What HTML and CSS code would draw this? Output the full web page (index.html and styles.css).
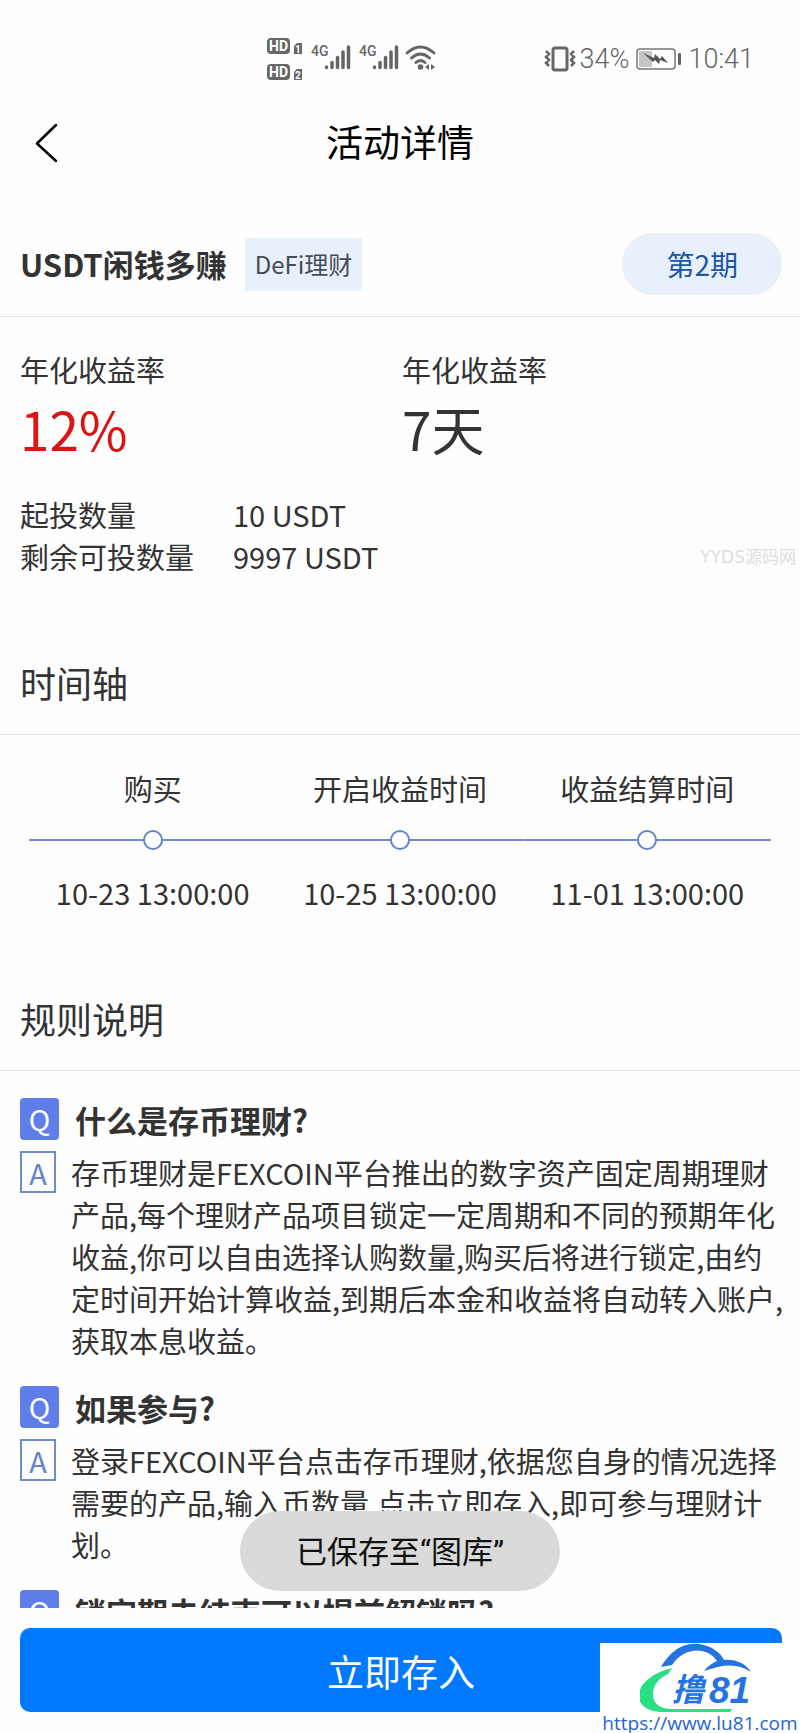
FILE: index.html
```html
<!DOCTYPE html>
<html lang="zh-CN">
<head>
<meta charset="utf-8">
<meta name="viewport" content="width=device-width, initial-scale=1">
<title>活动详情</title>
<link rel="stylesheet" href="styles.css">
</head>
<body>
<div class="status">
  <svg class="status-signal" width="170" height="48" viewBox="0 0 170 48" aria-hidden="true">
    <g fill="#666">
      <rect x="0" y="3" width="23" height="16" rx="4"/>
      <rect x="0" y="29" width="23" height="16" rx="4"/>
      <path d="M27 11l3-3h5v11h-8zM27 37l3-3h5v11h-8z"/>
    </g>
    <g class="hd-text">
      <text x="2" y="16">HD</text>
      <text x="2" y="42">HD</text>
      <text x="28" y="18" class="hd-num">1</text>
      <text x="28" y="44" class="hd-num">2</text>
    </g>
    <g class="net-text">
      <text x="44" y="21">4G</text>
      <text x="92" y="21">4G</text>
    </g>
    <g stroke="#666" stroke-width="3.500" stroke-linecap="round">
      <path d="M59.500 32v0.500M65 27.500v5M70.500 22.500v10M76 17v15.500M81.500 12v20.500"/>
      <path d="M107.500 32v0.500M113 27.500v5M118.500 22.500v10M124 17v15.500M129.500 12v20.500"/>
    </g>
    <g fill="none" stroke="#666" stroke-width="3" stroke-linecap="round">
      <path d="M140 18q13.500-12 27 0M144.500 23q9-8 18 0M149 27.500q4.500-4 9 0"/>
    </g>
    <circle cx="153.500" cy="32" r="2.800" fill="#666"/>
    <path d="M162 29v6l-4-3zM164 29v6l4-3z" fill="#666"/>
  </svg>
  <div class="status-right">
    <svg width="32" height="26" viewBox="0 0 32 26" fill="none" stroke="#666" aria-hidden="true">
      <rect x="9" y="2" width="14" height="22" rx="2" stroke-width="3"/>
      <path d="M2 5l3 3-3 3 3 3-3 3 3 3M30 5l-3 3 3 3-3 3 3 3-3 3" stroke-width="2.500"/>
    </svg>
    <span>34%</span>
    <svg class="battery" width="46" height="22" viewBox="0 0 46 22" aria-hidden="true">
      <rect x="1" y="1" width="38" height="20" rx="3" fill="none" stroke="#777" stroke-width="1.500"/>
      <rect x="3" y="3" width="13" height="16" fill="#c6c6c6"/>
      <path d="M7 5l11 5 1-4 5 5 2-3 6 7-8-3-1 4-4-4-2 2z" fill="#555"/>
      <rect x="42" y="5" width="3" height="12" rx="1" fill="#666"/>
    </svg>
    <span>10:41</span>
  </div>
</div>

<header class="nav">
  <button class="back" type="button" aria-label="返回">
    <svg width="24" height="40" viewBox="0 0 24 40" fill="none" stroke="#000" stroke-width="2.500" stroke-linecap="round" stroke-linejoin="round"><path d="M21 2L2 20.500 21 38"/></svg>
  </button>
  <h1>活动详情</h1>
</header>

<main class="content">
  <section class="product">
    <h2>USDT闲钱多赚</h2>
    <span class="tag">DeFi理财</span>
    <span class="period">第2期</span>
  </section>

  <section class="summary">
    <dl class="rates">
      <div><dt>年化收益率</dt><dd class="red">12%</dd></div>
      <div><dt>年化收益率</dt><dd>7天</dd></div>
    </dl>
    <dl class="amounts">
      <dt>起投数量</dt><dd>10 USDT</dd>
      <dt>剩余可投数量</dt><dd>9997 USDT</dd>
    </dl>
    <span class="watermark">YYDS源码网</span>
  </section>

  <h2 class="section-title">时间轴</h2>
  <ol class="timeline">
    <li><span>购买</span><i class="dot"></i><time>10-23 13:00:00</time></li>
    <li><span>开启收益时间</span><i class="dot"></i><time>10-25 13:00:00</time></li>
    <li><span>收益结算时间</span><i class="dot"></i><time>11-01 13:00:00</time></li>
  </ol>

  <h2 class="section-title">规则说明</h2>
  <section class="faq">
    <article>
      <h3><span class="q">Q</span>什么是存币理财?</h3>
      <div class="answer"><span class="a">A</span><p>存币理财是FEXCOIN平台推出的数字资产固定周期理财产品,每个理财产品项目锁定一定周期和不同的预期年化收益,你可以自由选择认购数量,购买后将进行锁定,由约定时间开始计算收益,到期后本金和收益将自动转入账户,获取本息收益。</p></div>
    </article>
    <article>
      <h3><span class="q">Q</span>如果参与?</h3>
      <div class="answer"><span class="a">A</span><p>登录FEXCOIN平台点击存币理财,依据您自身的情况选择需要的产品,输入币数量,点击立即存入,即可参与理财计划。</p></div>
    </article>
    <article>
      <h3><span class="q">Q</span>锁定期未结束可以提前解锁吗?</h3>
    </article>
  </section>
</main>

<footer class="footer">
  <button class="submit" type="button">立即存入</button>
</footer>

<div class="toast" role="status">已保存至“图库”</div>

<a class="brand" href="https://www.lu81.com">
  <svg width="120" height="70" viewBox="0 0 120 70" aria-hidden="true">
    <path d="M21 24C34 2 49 0 59 1c13 2 22 9 25 16 12-1 22 4 27 12-14-9-27-8-47-1 4-5 8-8 13-10C66 2 43 5 32 22z" fill="#2673df"/>
    <path d="M32 25C-8 35-12 66 20 69h70l2-3H30C8 66 7 40 28 31z" fill="#28df83"/>
    <text x="32" y="58" class="brand-cn">撸</text>
    <text x="69" y="60" class="brand-num">81</text>
  </svg>
  <span>https://www.lu81.com</span>
</a>
</body>
</html>
```

FILE: styles.css
```css
*, *::after { box-sizing: border-box; margin: 0; padding: 0; }

body {
  position: relative;
  display: flex;
  flex-direction: column;
  height: 100vh;
  overflow: hidden;
  background: #fefefe;
  color: #333;
  font: 29px/42px "Noto Sans CJK SC", sans-serif;
}

button { border: 0; background: none; font: inherit; color: inherit; }
ol { list-style: none; }

/* status bar */
.status {
  display: flex;
  flex: none;
  justify-content: space-between;
  align-items: center;
  height: 100px;
  padding: 18px 46px 0 267px;
}
.status-signal { font-family: Roboto, sans-serif; }
.hd-text { fill: #fff; font-size: 14px; font-weight: 700; }
.hd-num { font-size: 10px; }
.net-text { fill: #666; font-size: 14px; font-weight: 500; }
.status-right {
  display: flex;
  align-items: center;
  gap: 4px;
  color: #666;
  font: 300 27px/32px Roboto, sans-serif;
}
.battery { margin: 0 2px 0 3px; }

/* title bar */
.nav {
  display: grid;
  grid-template-columns: 80px 1fr 80px;
  flex: none;
  align-items: center;
  height: 86px;
  color: #000;
}
.back { display: flex; padding-left: 35px; }
.nav h1 { padding-bottom: 4px; font-size: 37px; font-weight: 400; text-align: center; }

.content { flex: 1; min-height: 0; overflow: hidden; }

/* product heading */
.product {
  display: flex;
  align-items: center;
  height: 131px;
  padding: 26px 18px 0 20px;
  border-bottom: 1px solid #e2e2e2;
}
.product h2 { font-size: 31px; }
.tag {
  margin-left: 18px;
  padding: 5px 10px 6px;
  background: #e8f0fb;
  color: #444b5a;
  font-size: 24px;
}
.period {
  margin-left: auto;
  padding: 10px 44px;
  border-radius: 31px;
  background: #e8f0fb;
  color: #1c56a5;
  font-size: 28px;
}

/* yields and amounts */
.summary { position: relative; padding: 31px 20px 0; }
.rates { display: grid; grid-template-columns: 1fr 1fr; }
.rates div:last-child { padding-left: 2px; }
.rates dd { padding: 2px 0 29px; font-size: 53px; line-height: 72px; }
.rates .red { color: #dc1414; }
.amounts { display: grid; grid-template-columns: 213px 1fr; }
.watermark {
  position: absolute;
  right: 4px;
  bottom: 8px;
  color: #ddd;
  font: 17px/24px "DejaVu Sans", "Noto Sans CJK SC", sans-serif;
}

.section-title {
  height: 98px;
  padding: 19px 20px;
  border-bottom: 1px solid #e2e2e2;
  font-size: 36px;
  font-weight: 400;
  line-height: 52px;
}
.summary + .section-title { margin-top: 60px; }

/* timeline */
.timeline {
  display: grid;
  grid-template-columns: repeat(3, 1fr);
  margin: 32px 29px 60px;
}
.timeline li {
  display: grid;
  justify-items: center;
  row-gap: 21px;
  text-align: center;
}
.dot {
  display: grid;
  align-items: center;
  width: 100%;
  height: 20px;
  background: linear-gradient(#6d8cc8, #6d8cc8) center / 100% 2px no-repeat;
}
.dot::after {
  content: "";
  justify-self: center;
  width: 20px;
  height: 20px;
  border: 2px solid #6384c8;
  border-radius: 50%;
  background: #fff;
}

/* questions */
.faq { padding: 27px 16px 0 20px; }
.faq article { margin-bottom: 25px; }
.faq h3 {
  display: flex;
  gap: 16px;
  font-size: 31px;
  line-height: 44px;
}
.q, .a { flex: none; height: 42px; font-size: 29px; font-weight: 400; text-align: center; }
.q { width: 39px; border-radius: 4px; background: #5f7eea; color: #fff; line-height: 40px; }
.a { width: 36px; border: 2px solid #6d8cc8; color: #6384c8; line-height: 38px; }
.answer { display: flex; gap: 15px; margin: 9px -4px 0 0; }

/* bottom action */
.footer { flex: none; padding: 20px 18px 21px 20px; }
.submit {
  display: block;
  width: 100%;
  height: 84px;
  padding-top: 2px;
  border-radius: 10px;
  background: #0079ff;
  color: #fff;
  font-size: 37px;
}

.toast {
  position: absolute;
  bottom: 142px;
  left: 50%;
  transform: translateX(-50%);
  padding: 21px 56px 17px;
  border-radius: 40px;
  background: #dadada;
  color: #111;
  font-family: Roboto, "Noto Sans CJK SC", sans-serif;
  font-size: 31px;
  white-space: nowrap;
}

.brand {
  position: absolute;
  right: 0;
  bottom: 0;
  display: flex;
  flex-direction: column;
  align-items: center;
  width: 200px;
  background: #fff;
  color: #1f66d0;
  font: 19px/20px "Open Sans", sans-serif;
  text-decoration: none;
}
.brand-cn { fill: #2673df; font: italic 700 32px "Noto Sans CJK SC", sans-serif; }
.brand-num { fill: #2673df; font: italic 700 37px "Liberation Sans", sans-serif; }
```
